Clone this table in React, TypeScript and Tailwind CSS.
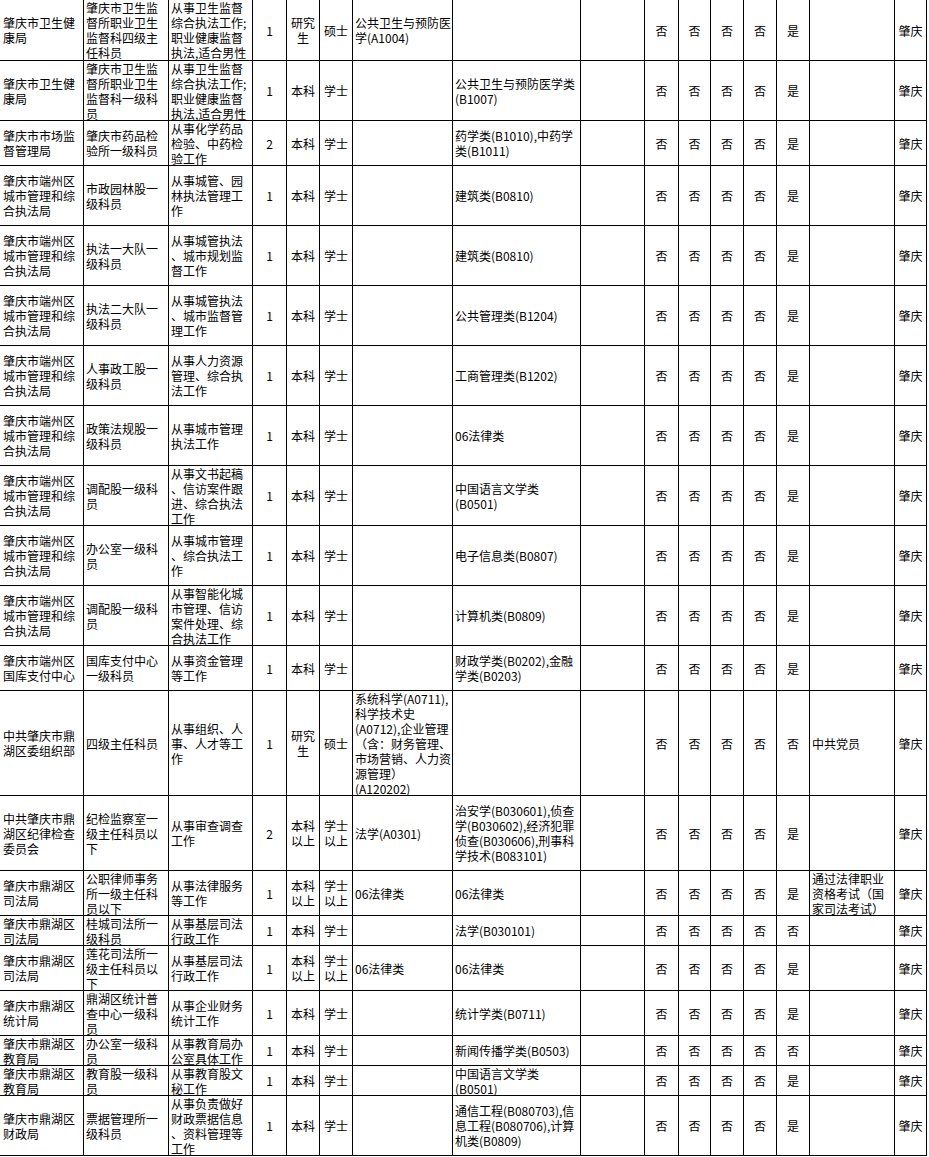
const cols = 'grid grid-cols-[84px_85px_84px_34px_33px_33px_100px_128px_64px_34px_32px_33px_33px_33px_85px_32px]'

// columns whose text sits in the middle of the cell
const centered = [false, false, false, true, true, true, false, false, false, true, true, true, true, true, false, true]

const N = '否'
const Y = '是'
const DH = '肇庆市端州区\n城市管理和综\n合执法局'

const rows: [string, string[]][] = [
  ['h-[61px]', ['肇庆市卫生健\n康局', '肇庆市卫生监\n督所职业卫生\n监督科四级主\n任科员', '从事卫生监督\n综合执法工作;\n职业健康监督\n执法,适合男性', '1', '研究\n生', '硕士', '公共卫生与预防医\n学(A1004)', '', '', N, N, N, N, Y, '', '肇庆']],
  ['h-[60px]', ['肇庆市卫生健\n康局', '肇庆市卫生监\n督所职业卫生\n监督科一级科\n员', '从事卫生监督\n综合执法工作;\n职业健康监督\n执法,适合男性', '1', '本科', '学士', '', '公共卫生与预防医学类\n(B1007)', '', N, N, N, N, Y, '', '肇庆']],
  ['h-[45px]', ['肇庆市市场监\n督管理局', '肇庆市药品检\n验所一级科员', '从事化学药品\n检验、中药检\n验工作', '2', '本科', '学士', '', '药学类(B1010),中药学\n类(B1011)', '', N, N, N, N, Y, '', '肇庆']],
  ['h-[60px]', [DH, '市政园林股一\n级科员', '从事城管、园\n林执法管理工\n作', '1', '本科', '学士', '', '建筑类(B0810)', '', N, N, N, N, Y, '', '肇庆']],
  ['h-[60px]', [DH, '执法一大队一\n级科员', '从事城管执法\n、城市规划监\n督工作', '1', '本科', '学士', '', '建筑类(B0810)', '', N, N, N, N, Y, '', '肇庆']],
  ['h-[60px]', [DH, '执法二大队一\n级科员', '从事城管执法\n、城市监督管\n理工作', '1', '本科', '学士', '', '公共管理类(B1204)', '', N, N, N, N, Y, '', '肇庆']],
  ['h-[60px]', [DH, '人事政工股一\n级科员', '从事人力资源\n管理、综合执\n法工作', '1', '本科', '学士', '', '工商管理类(B1202)', '', N, N, N, N, Y, '', '肇庆']],
  ['h-[60px]', [DH, '政策法规股一\n级科员', '从事城市管理\n执法工作', '1', '本科', '学士', '', '06法律类', '', N, N, N, N, Y, '', '肇庆']],
  ['h-[60px]', [DH, '调配股一级科\n员', '从事文书起稿\n、信访案件跟\n进、综合执法\n工作', '1', '本科', '学士', '', '中国语言文学类\n(B0501)', '', N, N, N, N, Y, '', '肇庆']],
  ['h-[60px]', [DH, '办公室一级科\n员', '从事城市管理\n、综合执法工\n作', '1', '本科', '学士', '', '电子信息类(B0807)', '', N, N, N, N, Y, '', '肇庆']],
  ['h-[60px]', [DH, '调配股一级科\n员', '从事智能化城\n市管理、信访\n案件处理、综\n合执法工作', '1', '本科', '学士', '', '计算机类(B0809)', '', N, N, N, N, Y, '', '肇庆']],
  ['h-[45px]', ['肇庆市端州区\n国库支付中心', '国库支付中心\n一级科员', '从事资金管理\n等工作', '1', '本科', '学士', '', '财政学类(B0202),金融\n学类(B0203)', '', N, N, N, N, Y, '', '肇庆']],
  ['h-[105px]', ['中共肇庆市鼎\n湖区委组织部', '四级主任科员', '从事组织、人\n事、人才等工\n作', '1', '研究\n生', '硕士', '系统科学(A0711),\n科学技术史\n(A0712),企业管理\n（含：财务管理、\n市场营销、人力资\n源管理）\n(A120202)', '', '', N, N, N, N, N, '中共党员', '肇庆']],
  ['h-[75px]', ['中共肇庆市鼎\n湖区纪律检查\n委员会', '纪检监察室一\n级主任科员以\n下', '从事审查调查\n工作', '2', '本科\n以上', '学士\n以上', '法学(A0301)', '治安学(B030601),侦查\n学(B030602),经济犯罪\n侦查(B030606),刑事科\n学技术(B083101)', '', N, N, N, N, Y, '', '肇庆']],
  ['h-[45px]', ['肇庆市鼎湖区\n司法局', '公职律师事务\n所一级主任科\n员以下', '从事法律服务\n等工作', '1', '本科\n以上', '学士\n以上', '06法律类', '06法律类', '', N, N, N, N, Y, '通过法律职业\n资格考试（国\n家司法考试）', '肇庆']],
  ['h-[30px]', ['肇庆市鼎湖区\n司法局', '桂城司法所一\n级科员', '从事基层司法\n行政工作', '1', '本科', '学士', '', '法学(B030101)', '', N, N, N, N, N, '', '肇庆']],
  ['h-[45px]', ['肇庆市鼎湖区\n司法局', '莲花司法所一\n级主任科员以\n下', '从事基层司法\n行政工作', '1', '本科\n以上', '学士\n以上', '06法律类', '06法律类', '', N, N, N, N, Y, '', '肇庆']],
  ['h-[45px]', ['肇庆市鼎湖区\n统计局', '鼎湖区统计普\n查中心一级科\n员', '从事企业财务\n统计工作', '1', '本科', '学士', '', '统计学类(B0711)', '', N, N, N, N, Y, '', '肇庆']],
  ['h-[30px]', ['肇庆市鼎湖区\n教育局', '办公室一级科\n员', '从事教育局办\n公室具体工作', '1', '本科', '学士', '', '新闻传播学类(B0503)', '', N, N, N, N, N, '', '肇庆']],
  ['h-[30px]', ['肇庆市鼎湖区\n教育局', '教育股一级科\n员', '从事教育股文\n秘工作', '1', '本科', '学士', '', '中国语言文学类\n(B0501)', '', N, N, N, N, Y, '', '肇庆']],
  ['h-[60px]', ['肇庆市鼎湖区\n财政局', '票据管理所一\n级科员', '从事负责做好\n财政票据信息\n、资料管理等\n工作', '1', '本科', '学士', '', '通信工程(B080703),信\n息工程(B080706),计算\n机类(B0809)', '', N, N, N, N, Y, '', '肇庆']],
]

function Cell({ text, i }: { text: string; i: number }) {
  const align = centered[i] ? 'justify-center text-center' : i === 0 ? 'pl-[3px]' : 'pl-[2px]'
  return (
    <div className={`flex items-center-safe overflow-hidden border-r border-b border-black whitespace-pre ${align}`}>
      <div>{text}</div>
    </div>
  )
}

export default function App() {
  return (
    <div className="min-h-screen bg-white">
      <div className="w-[927px] font-['Noto_Sans_CJK_SC',sans-serif] text-[12px] leading-[15px] text-black">
        {rows.map(([h, cells], r) => (
          <div key={r} className={`${cols} ${h}`}>
            {cells.map((t, i) => (
              <Cell key={i} text={t} i={i} />
            ))}
          </div>
        ))}
      </div>
    </div>
  )
}
